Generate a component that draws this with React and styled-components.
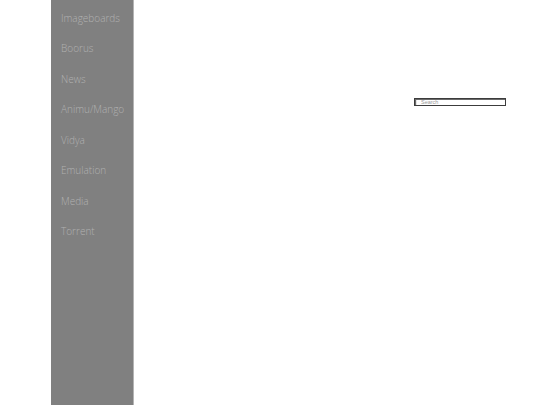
import React from 'react';
import styled, { createGlobalStyle } from 'styled-components';

const GlobalStyle = createGlobalStyle`
    html, body {
        margin: 0;
        padding: 0;
        background: #ffffff;
    }
    body {
        font-family: "Open Sans", "Liberation Sans", sans-serif;
    }
`

const links = ['Imageboards', 'Boorus', 'News', 'Animu/Mango', 'Vidya', 'Emulation', 'Media', 'Torrent'];

function App() {
    return (
        <Page>
            <GlobalStyle />
            <Sidebar>
                {links.map(link => (
                    <NavItem key={link}>{link}</NavItem>
                ))}
            </Sidebar>
            <Main>
                <SearchBox type="text" placeholder="Search" />
            </Main>
        </Page>
    )
}

const Page = styled.div`
    display: flex;
    height: 405px;
    padding-left: 51px;
    overflow: hidden;
`

const Sidebar = styled.nav`
    width: 82px;
    height: 100%;
    background: #808080;
    border-right: 1px solid #b4b4b4;
    display: flex;
    flex-direction: column;
    padding-top: 11px;
    gap: 15.45px;
`

const NavItem = styled.a`
    display: block;
    padding-left: 10px;
    font-family: "Open Sans", "Liberation Sans", sans-serif;
    font-weight: 300;
    font-size: 10px;
    line-height: 15px;
    color: #b0b0b0;
    white-space: nowrap;
    cursor: pointer;
`

const Main = styled.main`
    flex: 1;
    display: flex;
    justify-content: flex-end;
    align-items: flex-start;
    padding: 98px 34px 0 0;
`

const SearchBox = styled.input`
    box-sizing: border-box;
    width: 92px;
    height: 8px;
    padding: 0 0 0 6px;
    border: 1px solid #3c3c3c;
    box-shadow: inset 1px 1px 0 #6a6a6a, inset 2px 0 0 #e4e4e4;
    outline: none;
    font-family: "Liberation Sans", Arial, sans-serif;
    font-size: 5.5px;
    color: #333;
    &::placeholder {
        color: #9a9a9a;
    }
`

export default App;
